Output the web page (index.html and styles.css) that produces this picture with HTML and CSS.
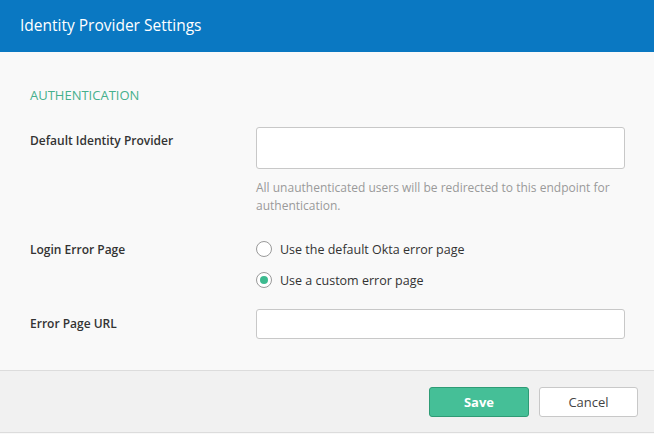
FILE: index.html
```html
<!DOCTYPE html>
<html>
<head>
<meta charset="utf-8">
<link rel="stylesheet" href="styles.css">
</head>
<body>
<div class="dialog">
  <header class="head">Identity Provider Settings</header>
  <main class="body">
    <h2 class="section">AUTHENTICATION</h2>
    <div class="row row-idp">
      <label class="label">Default Identity Provider</label>
      <div class="control">
        <input class="input input-tall" type="text">
        <p class="help">All unauthenticated users will be redirected to this endpoint for authentication.</p>
      </div>
    </div>
    <div class="row row-err">
      <label class="label">Login Error Page</label>
      <div class="control radios">
        <div class="radio"><span class="dot"></span><span>Use the default Okta error page</span></div>
        <div class="radio"><span class="dot on"></span><span>Use a custom error page</span></div>
      </div>
    </div>
    <div class="row row-url">
      <label class="label">Error Page URL</label>
      <div class="control">
        <input class="input input-short" type="text">
      </div>
    </div>
  </main>
  <footer class="foot">
    <button class="btn save">Save</button>
    <button class="btn cancel">Cancel</button>
  </footer>
</div>
</body>
</html>
```
FILE: styles.css
```css
html, body { margin: 0; padding: 0; }
body {
  font-family: "Open Sans", "Liberation Sans", sans-serif;
  background: #f9f9f9;
  width: 654px;
  height: 434px;
  overflow: hidden;
}
.dialog { display: flex; flex-direction: column; height: 434px; }
.head {
  height: 52px;
  background: #0a78c2;
  color: #fff;
  font-size: 15.5px;
  line-height: 50px;
  padding-left: 20px;
  box-sizing: border-box;
}
.body {
  flex: 0 0 318px;
  box-sizing: border-box;
  padding: 34px 29px 0 30px;
  background: #f9f9f9;
}
.section {
  margin: 0;
  font-size: 13px;
  font-weight: 400;
  color: #45b08c;
  line-height: 18px;
  height: 18px;
}
.row { display: flex; }
.label {
  width: 226px;
  flex: 0 0 226px;
  font-size: 12px;
  font-weight: 600;
  color: #333;
}
.control { flex: 1; }
.row-idp { margin-top: 23px; }
.row-idp .label { padding-top: 6px; line-height: 16px; }
.input {
  display: block;
  width: 369px;
  box-sizing: border-box;
  border: 1px solid #c8c8c8;
  border-radius: 3px;
  background: #fff;
  margin: 0;
}
.input-tall { height: 42px; }
.input-short { height: 30px; }
.help {
  margin: 10px 0 0;
  font-size: 12px;
  line-height: 18px;
  color: #9a9a9a;
  width: 369px;
}
.row-err { margin-top: 25px; }
.row-err .label { line-height: 16px; padding-top: 2px; }
.radios { display: flex; flex-direction: column; gap: 13px; }
.radio {
  display: flex;
  align-items: center;
  font-size: 12.5px;
  color: #333;
  height: 18px;
}
.dot {
  width: 14px;
  height: 14px;
  border: 1px solid #9a9a9a;
  border-radius: 50%;
  background: #fff;
  margin-right: 8px;
  box-sizing: content-box;
  position: relative;
}
.dot.on::after {
  content: "";
  position: absolute;
  left: 3px; top: 3px;
  width: 8px; height: 8px;
  border-radius: 50%;
  background: #3cba8f;
}
.row-url { margin-top: 20px; }
.row-url .label { line-height: 30px; }
.foot {
  flex: 0 0 63px;
  box-sizing: border-box;
  border-top: 1px solid #dcdcdc;
  border-bottom: 1px solid #dcdcdc;
  background: #f1f1f1;
  display: flex;
  justify-content: flex-end;
  align-items: flex-start;
  padding: 16px 16px 0 0;
  gap: 10px;
}
.btn {
  height: 30px;
  border-radius: 3px;
  font-family: inherit;
  font-size: 13px;
  margin: 0;
  padding: 0;
}
.save {
  width: 100px;
  background: #45bf97;
  border: 1px solid #2e9b75;
  color: #fff;
  font-weight: 700;
}
.cancel {
  width: 99px;
  background: #fff;
  border: 1px solid #c8c8c8;
  color: #444;
}
```
